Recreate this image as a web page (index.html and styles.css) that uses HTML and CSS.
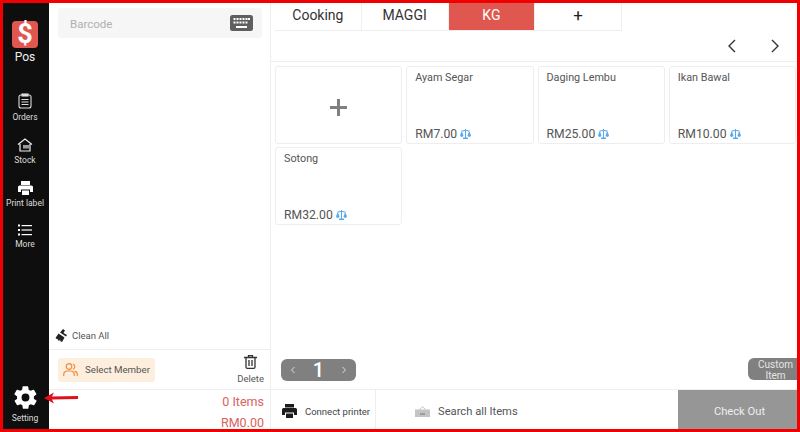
FILE: index.html
```html
<!DOCTYPE html>
<html lang="en">
<head>
    <meta charset="UTF-8">
    <meta name="viewport" content="width=device-width, initial-scale=1.0">
    <title>Pos</title>
    <link rel="stylesheet" href="styles.css">
</head>
<body>
    <div class="frame">
        <nav class="sidebar">
            <div class="logo">$</div>
            <div class="logo-label">Pos</div>
            <div class="side-item side-orders">
                <svg width="14" height="16" viewBox="0 0 14 16" fill="none" stroke="#ddd" stroke-width="1.1"><rect x="1" y="2" width="12" height="13" rx="2"/><rect x="4" y="1" width="6" height="2" fill="#ddd"/><path d="M3.500 6.500h7M3.500 9h7M3.500 11.500h7"/></svg>
                <span>Orders</span>
            </div>
            <div class="side-item">
                <svg width="16" height="14" viewBox="0 0 16 14" fill="none" stroke="#eee" stroke-width="1.2"><path d="M1 6.500 8 1l7 5.500M3 6v7h10V6"/><rect x="6" y="7" width="6" height="3.500" fill="#999" stroke="none"/></svg>
                <span>Stock</span>
            </div>
            <div class="side-item">
                <svg width="15" height="14" viewBox="0 0 15 14"><path fill="#fff" d="M3 0h9v4H3zM1.500 4.500h12A1.500 1.500 0 0 1 15 6v5h-3V8.500H3V11H0V6a1.500 1.500 0 0 1 1.500-1.500zM4 9.500h7V14H4z"/></svg>
                <span>Print label</span>
            </div>
            <div class="side-item">
                <svg width="14" height="12" viewBox="0 0 14 12" fill="#fff"><rect x="0" y="0.500" width="2" height="2"/><rect x="3.500" y="1" width="10.500" height="1.200"/><rect x="0" y="5" width="2" height="2"/><rect x="3.500" y="5.400" width="10.500" height="1.200"/><rect x="0" y="9.500" width="2" height="2"/><rect x="3.500" y="10" width="10.500" height="1.200"/></svg>
                <span>More</span>
            </div>
            <div class="side-item side-setting">
                <svg width="27" height="27" viewBox="0 0 24 24"><path fill="#fff" fill-rule="evenodd" d="M19.400 13c.1-.3.100-.7.100-1s0-.7-.1-1l2.100-1.600c.2-.2.300-.4.100-.7l-2-3.400c-.1-.2-.4-.3-.6-.2l-2.500 1c-.5-.4-1.100-.7-1.700-1l-.4-2.600c0-.3-.2-.5-.5-.5h-4c-.3 0-.5.200-.5.500l-.4 2.600c-.6.300-1.200.6-1.700 1l-2.500-1c-.2-.1-.5 0-.6.200l-2 3.400c-.2.300-.1.500.1.700L4.600 11c-.1.300-.1.700-.1 1s0 .7.100 1l-2.100 1.600c-.2.200-.3.400-.1.700l2 3.400c.1.200.4.300.6.200l2.500-1c.5.400 1.100.7 1.700 1l.4 2.600c0 .3.200.5.500.5h4c.3 0 .5-.2.500-.5l.4-2.600c.6-.3 1.200-.6 1.700-1l2.500 1c.2.100.5 0 .6-.2l2-3.400c.2-.3.100-.5-.1-.7zM12 15.500a3.500 3.500 0 1 1 0-7 3.500 3.500 0 0 1 0 7z"/></svg>
                <span>Setting</span>
            </div>
        </nav>

        <section class="cart">
            <div class="barcode">
                <span>Barcode</span>
                <svg width="23" height="16" viewBox="0 0 23 16"><rect width="23" height="16" rx="2.500" fill="#5f5f5f"/><g fill="#fff"><rect x="3.500" y="3" width="2" height="2"/><rect x="6.500" y="3" width="2" height="2"/><rect x="9.500" y="3" width="2" height="2"/><rect x="12.500" y="3" width="2" height="2"/><rect x="15.500" y="3" width="2" height="2"/><rect x="18" y="3" width="2" height="2"/><rect x="3.500" y="6.500" width="2" height="2"/><rect x="6.500" y="6.500" width="2" height="2"/><rect x="9.500" y="6.500" width="2" height="2"/><rect x="12.500" y="6.500" width="2" height="2"/><rect x="15.500" y="6.500" width="2" height="2"/><rect x="6" y="11" width="11" height="2"/></g></svg>
            </div>
            <div class="cart-space"></div>
            <div class="clean-all">
                <svg width="13" height="13" viewBox="0 0 13 13"><path fill="#222" d="M8 0l2 1.500-1.500 2.500L12 6l-1 1.500-6-4 1 -1zM3.500 4.500l6 4L7 13l-2-1 .5-1.500L4 11.800 2.500 11 3.500 9.500 2 10.300.5 9z"/></svg>
                <span>Clean All</span>
            </div>
            <div class="member-row">
                <div class="member">
                    <svg width="15" height="14" viewBox="0 0 15 14" fill="none" stroke="#ee8f3a" stroke-width="1.200"><circle cx="6" cy="3.500" r="2.800"/><path d="M.7 13v-1.500A3.500 3.500 0 0 1 4.200 8h3.600a3.500 3.500 0 0 1 3.500 3.500V13M10 1a2.800 2.800 0 0 1 0 5.200M11.500 8.200a3.500 3.500 0 0 1 2.800 3.300V13"/></svg>
                    <span>Select Member</span>
                </div>
                <div class="delete">
                    <svg width="13" height="14" viewBox="0 0 13 14" fill="none" stroke="#333" stroke-width="1.300"><path d="M0 2.500h13M4.500 2.500V.7h4v1.800M2 2.500V12a1.300 1.300 0 0 0 1.300 1.300h6.400A1.300 1.300 0 0 0 11 12V2.500M5 5v6M8 5v6"/></svg>
                    <span>Delete</span>
                </div>
            </div>
            <div class="totals">
                <div>0 Items</div>
                <div>RM0.00</div>
            </div>
        </section>

        <main class="main">
            <div class="tabs">
                <div class="tab">Cooking</div>
                <div class="tab">MAGGI</div>
                <div class="tab tab-active">KG</div>
                <div class="tab tab-add">+</div>
            </div>
            <div class="page-nav">
                <svg width="10" height="14" viewBox="0 0 10 14" fill="none" stroke="#333" stroke-width="1.400"><path d="M8 1 2 7l6 6"/></svg>
                <svg width="10" height="14" viewBox="0 0 10 14" fill="none" stroke="#333" stroke-width="1.400"><path d="m2 1 6 6-6 6"/></svg>
            </div>
            <div class="grid">
                <div class="card card-add"><div class="plus"></div></div>
                <div class="card">
                    <div class="card-name">Ayam Segar</div>
                    <div class="card-price">RM7.00 <svg class="scale" width="11" height="10" viewBox="0 0 11 10"><use href="#scale-icon"/></svg></div>
                </div>
                <div class="card">
                    <div class="card-name">Daging Lembu</div>
                    <div class="card-price">RM25.00 <svg class="scale" width="11" height="10" viewBox="0 0 11 10"><use href="#scale-icon"/></svg></div>
                </div>
                <div class="card">
                    <div class="card-name">Ikan Bawal</div>
                    <div class="card-price">RM10.00 <svg class="scale" width="11" height="10" viewBox="0 0 11 10"><use href="#scale-icon"/></svg></div>
                </div>
                <div class="card">
                    <div class="card-name">Sotong</div>
                    <div class="card-price">RM32.00 <svg class="scale" width="11" height="10" viewBox="0 0 11 10"><use href="#scale-icon"/></svg></div>
                </div>
            </div>
            <div class="pager-row">
                <div class="pager">
                    <svg width="6" height="8" viewBox="0 0 6 8" fill="none" stroke="#ddd" stroke-width="1"><path d="M4.500 1 1.500 4l3 3"/></svg>
                    <span>1</span>
                    <svg width="6" height="8" viewBox="0 0 6 8" fill="none" stroke="#ddd" stroke-width="1"><path d="m1.500 1 3 3-3 3"/></svg>
                </div>
                <div class="custom-item">Custom<br>Item</div>
            </div>
            <div class="bottom-bar">
                <div class="connect">
                    <svg width="15" height="14" viewBox="0 0 15 14"><path fill="#1c1c1c" d="M3 0h9v3.500H3zM1.500 4h12A1.500 1.500 0 0 1 15 5.500V11h-3V8.500H3V11H0V5.500A1.500 1.500 0 0 1 1.500 4zM4 9.500h7V14H4z"/></svg>
                    <span>Connect printer</span>
                </div>
                <div class="search">
                    <svg width="15" height="11" viewBox="0 0 15 11"><path fill="#c4c4c4" d="M0 3.500h15V11H0z"/><path fill="none" stroke="#c4c4c4" d="M4.500 3.500 7.500.7l3 2.800"/><rect x="5" y="7.500" width="5" height="1" fill="#777"/></svg>
                    <span>Search all Items</span>
                </div>
                <div class="checkout">Check Out</div>
            </div>
        </main>

        <svg class="arrow" width="34" height="12" viewBox="0 0 34 12"><path fill="#e0101a" d="M0 6 10 .5 8 4.500l26-.5v3L8 7.500l2 4z"/></svg>
    </div>

    <svg width="0" height="0" class="defs">
        <symbol id="scale-icon" viewBox="0 0 11 10">
            <path fill="#58a9ee" d="M5 0h1v1l3.500.5v1L11 6.500a1.800 1.800 0 0 1-3.500 0L9 2.500 6 2v6.500h2V10H3V8.500h2V2l-3 .5 1.500 4a1.800 1.800 0 0 1-3.500 0L1.500 2.500v-1L5 1z"/>
        </symbol>
    </svg>
</body>
</html>
```

FILE: styles.css
```css
html, body {
    margin: 0;
    padding: 0;
}
body {
    font-family: Roboto, "Liberation Sans", sans-serif;
    background-color: #fff;
    overflow: hidden;
}
.defs {
    position: absolute;
}
.frame {
    position: relative;
    box-sizing: border-box;
    width: 800px;
    height: 432px;
    border: 3px solid #f00000;
    display: flex;
    overflow: hidden;
}

/* left black bar */
.sidebar {
    width: 46px;
    flex-shrink: 0;
    background-color: #0e0e0e;
    color: #ddd;
    display: flex;
    flex-direction: column;
    align-items: center;
    padding: 18px 2px 0 0;
    box-sizing: border-box;
}
.logo {
    width: 26px;
    height: 27px;
    border-radius: 4px;
    background-color: #e0574f;
    color: #fff;
    font-size: 27px;
    font-weight: 700;
    line-height: 27px;
    text-align: center;
}
.logo-label {
    font-size: 12px;
    line-height: 14px;
    margin-top: 2px;
    color: #eee;
}
.side-item {
    display: flex;
    flex-direction: column;
    align-items: center;
    margin-top: 15px;
    font-size: 8.500px;
    line-height: 11px;
    white-space: nowrap;
}
.side-item span {
    margin-top: 3px;
}
.side-orders {
    margin-top: 29px;
}
.side-setting {
    margin-top: auto;
    margin-bottom: 5px;
}
.side-setting span {
    margin-top: 2px;
}

/* cart column */
.cart {
    width: 222px;
    flex-shrink: 0;
    box-sizing: border-box;
    border-right: 1px solid #eee;
    display: flex;
    flex-direction: column;
}
.barcode {
    margin: 5px 8px 0 9px;
    height: 30px;
    padding: 0 9px 0 12px;
    background-color: #f6f6f6;
    border-radius: 3px;
    display: flex;
    align-items: center;
    justify-content: space-between;
    color: #b0b0b0;
    font-size: 11.500px;
}
.barcode span {
    padding-top: 1px;
}
.cart-space {
    flex: 1;
}
.clean-all {
    display: flex;
    align-items: center;
    gap: 4px;
    height: 23px;
    padding: 0 0 2px 6px;
    font-size: 9.500px;
    color: #555;
    border-bottom: 1px solid #eee;
}
.member-row {
    display: flex;
    justify-content: space-between;
    align-items: center;
    box-sizing: border-box;
    height: 40px;
    padding: 0 6px 0 9px;
    border-bottom: 1px solid #eee;
}
.member {
    width: 97px;
    height: 24px;
    box-sizing: border-box;
    background-color: #fdeedd;
    border-radius: 3px;
    display: flex;
    align-items: center;
    padding-left: 5px;
    gap: 7px;
    font-size: 9.700px;
    color: #555;
}
.delete {
    display: flex;
    flex-direction: column;
    align-items: center;
    gap: 4px;
    font-size: 9.500px;
    color: #555;
}
.totals {
    height: 39px;
    box-sizing: border-box;
    padding: 1px 6px 0 0;
    text-align: right;
    color: #d8635c;
    font-size: 12.500px;
    line-height: 21px;
}

/* products */
.main {
    flex: 1;
    min-width: 0;
    display: flex;
    flex-direction: column;
}
.tabs {
    display: flex;
    margin-left: 4px;
    height: 28px;
    width: 347px;
    flex-shrink: 0;
    box-sizing: border-box;
    border-bottom: 1px solid #eee;
}
.tab {
    width: 87px;
    box-sizing: border-box;
    border-right: 1px solid #f0f0f0;
    text-align: center;
    font-size: 14px;
    line-height: 25px;
    color: #333;
}
.tab-active {
    background-color: #e0574f;
    color: #fff;
}
.tab-add {
    font-size: 17px;
    color: #222;
}
.page-nav {
    height: 31px;
    flex-shrink: 0;
    box-sizing: border-box;
    border-bottom: 1px solid #eee;
    display: flex;
    justify-content: flex-end;
    align-items: center;
    gap: 33px;
    padding-right: 17px;
}
.grid {
    flex: 1;
    display: grid;
    grid-template-columns: repeat(4, 1fr);
    grid-auto-rows: 78px;
    gap: 3px 4px;
    padding: 4px 1px 0 4px;
}
.card {
    border: 1px solid #eee;
    border-radius: 3px;
    box-sizing: border-box;
    padding: 4px 8px 0;
    display: flex;
    flex-direction: column;
    justify-content: space-between;
    font-size: 10.800px;
    color: #555;
}
.card-name {
    line-height: 14px;
}
.card-price {
    font-size: 12.200px;
    line-height: 17px;
    white-space: nowrap;
}
.scale {
    vertical-align: -1px;
}
.card-add {
    align-items: center;
    justify-content: center;
}
.plus {
    width: 17px;
    height: 17px;
    background:
        linear-gradient(#808080, #808080) center / 17px 3px no-repeat,
        linear-gradient(#808080, #808080) center / 3px 17px no-repeat;
}
.pager-row {
    display: flex;
    justify-content: space-between;
    align-items: flex-start;
    height: 30px;
    flex-shrink: 0;
    padding-left: 10px;
}
.pager {
    width: 75px;
    height: 22px;
    box-sizing: border-box;
    border-radius: 6px;
    background-color: #808080;
    color: #fff;
    display: flex;
    align-items: center;
    justify-content: space-between;
    padding: 0 9px;
    font-size: 20px;
    font-weight: 500;
}
.custom-item {
    width: 55px;
    height: 22px;
    box-sizing: border-box;
    flex-shrink: 0;
    margin: -1px -6px 0 0;
    padding-top: 1px;
    background-color: #808080;
    color: #e6e6e6;
    border-radius: 6px 0 0 6px;
    text-align: center;
    font-size: 10px;
    line-height: 11px;
}
.bottom-bar {
    height: 40px;
    flex-shrink: 0;
    border-top: 1px solid #eee;
    display: flex;
    align-items: stretch;
    box-sizing: border-box;
}
.connect {
    width: 105px;
    box-sizing: border-box;
    border-right: 1px solid #eee;
    display: flex;
    align-items: center;
    gap: 8px;
    padding: 3px 0 0 11px;
    font-size: 9.500px;
    color: #444;
    white-space: nowrap;
}
.search {
    flex: 1;
    display: flex;
    align-items: center;
    gap: 8px;
    padding: 3px 0 0 39px;
    font-size: 11.200px;
    color: #555;
}
.checkout {
    width: 119px;
    background-color: #969696;
    color: #eee;
    font-size: 11.200px;
    display: flex;
    align-items: center;
    justify-content: center;
    padding: 3px 0 0 4px;
    box-sizing: border-box;
}

/* annotation drawn on top of the shot */
.arrow {
    position: absolute;
    left: 41px;
    top: 389px;
}
```
